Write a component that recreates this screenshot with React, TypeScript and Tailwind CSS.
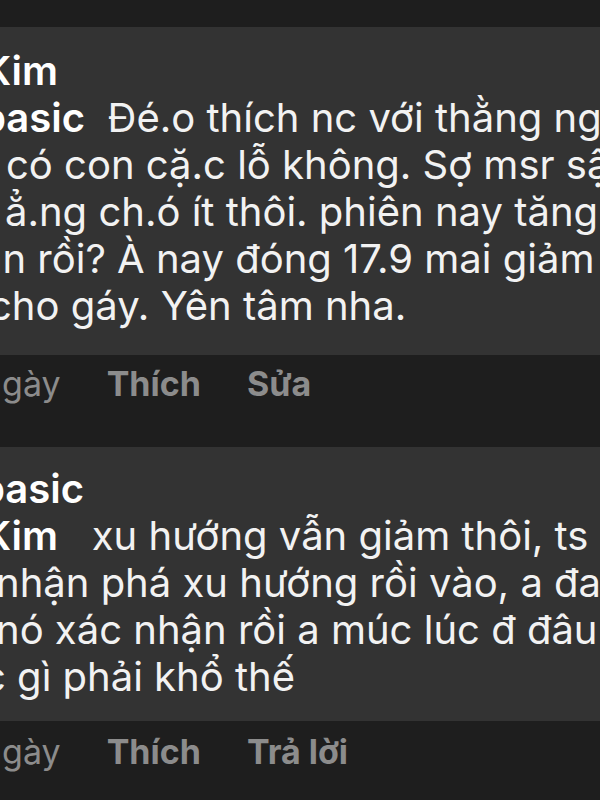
import React from "react";

type Line = { cls: string; parts: { text: string; bold?: boolean }[] };

const first: Line[] = [
  { cls: "ml-[-17px]", parts: [{ text: "Kim", bold: true }] },
  {
    cls: "ml-[-19px]",
    parts: [
      { text: "basic", bold: true },
      { text: "  Đé.o thích nc với thằng ngu" },
    ],
  },
  { cls: "ml-[6px]", parts: [{ text: "có con cặ.c lỗ không. Sợ msr sập" }] },
  { cls: "ml-[5px]", parts: [{ text: "ẳ.ng ch.ó ít thôi. phiên nay tăng" }] },
  { cls: "ml-[-20px]", parts: [{ text: "ăn rồi? À nay đóng 17.9 mai giảm" }] },
  { cls: "ml-[-11px]", parts: [{ text: "cho gáy. Yên tâm nha." }] },
];

const second: Line[] = [
  { cls: "ml-[-20px]", parts: [{ text: "basic", bold: true }] },
  {
    cls: "ml-[-17px]",
    parts: [
      { text: "Kim", bold: true },
      { text: "   xu hướng vẫn giảm thôi, ts đã" },
    ],
  },
  { cls: "ml-[-4px]", parts: [{ text: "nhận phá xu hướng rồi vào, a đang" }] },
  { cls: "ml-[-4px]", parts: [{ text: "nó xác nhận rồi a múc lúc đ đâu" }] },
  { cls: "ml-[-17px]", parts: [{ text: "c gì phải khổ thế" }] },
];

function Bubble({ lines, pad }: { lines: Line[]; pad: string }) {
  return (
    <div className={`bg-[#333333] ${pad}`}>
      {lines.map((line, i) => (
        <div key={i} className={`whitespace-pre leading-[47px] ${line.cls}`}>
          {line.parts.map((p, j) => (
            <span
              key={j}
              className={p.bold ? "font-semibold text-white" : "font-normal text-[#f2f2f2]"}
            >
              {p.text}
            </span>
          ))}
        </div>
      ))}
    </div>
  );
}

function Actions({ reply, cls }: { reply: string; cls: string }) {
  return (
    <div className={`flex items-center text-[34px] text-[#8c8c8c] ${cls}`}>
      <span className="ml-[-18px] font-normal">ngày</span>
      <span className="ml-[46px] font-bold">Thích</span>
      <span className="ml-[46px] font-bold">{reply}</span>
    </div>
  );
}

export default function App() {
  return (
    <div
      className="w-[600px] h-[800px] overflow-hidden bg-[#1e1e1e] text-[40px]"
      style={{ fontFamily: "Inter, 'Noto Sans', sans-serif" }}
    >
      <div className="h-[27px]" />
      <Bubble lines={first} pad="pt-[20px] pb-[26px]" />
      <Actions reply="Sửa" cls="h-[92px] pb-[36px]" />
      <Bubble lines={second} pad="pt-[18px] pb-[21px]" />
      <Actions reply="Trả lời" cls="h-[79px] pb-[18px]" />
    </div>
  );
}
